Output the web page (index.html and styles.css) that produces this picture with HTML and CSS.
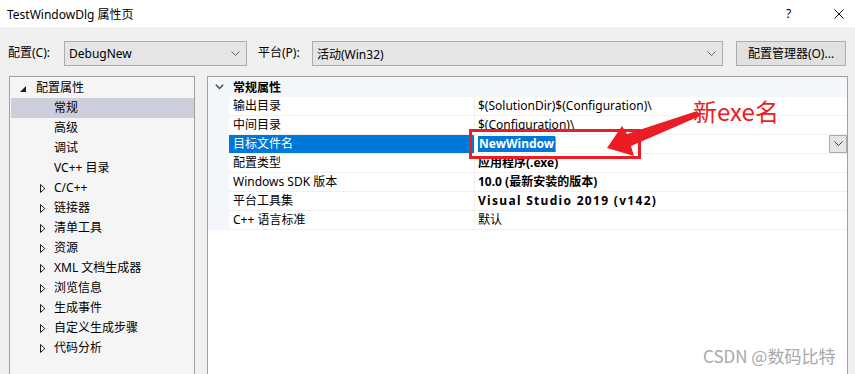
FILE: index.html
```html
<!DOCTYPE html>
<html lang="zh-CN">
<head>
<meta charset="utf-8">
<title>TestWindowDlg 属性页</title>
<link rel="stylesheet" href="styles.css">
</head>
<body>
<div class="window">
  <header class="titlebar">
    <span class="title">TestWindowDlg 属性页</span>
    <span class="help">?</span>
    <span class="close"><svg width="10" height="10" viewBox="0 0 10 10"><path d="M0.5 0.5 L9.5 9.5 M9.5 0.5 L0.5 9.5" stroke="#111" stroke-width="1"/></svg></span>
  </header>

  <div class="toolbar">
    <span class="label cfg-label">配置(C):</span>
    <div class="combo combo-cfg"><span>DebugNew</span><svg class="chev" width="9" height="6" viewBox="0 0 9 6"><path d="M0.5 0.5 L4.5 4.5 L8.5 0.5" fill="none" stroke="#606060" stroke-width="1"/></svg></div>
    <span class="label plat-label">平台(P):</span>
    <div class="combo combo-plat"><span>活动(Win32)</span><svg class="chev" width="9" height="6" viewBox="0 0 9 6"><path d="M0.5 0.5 L4.5 4.5 L8.5 0.5" fill="none" stroke="#606060" stroke-width="1"/></svg></div>
    <div class="btn">配置管理器(O)...</div>
  </div>

  <div class="main">
    <nav class="tree">
      <div class="node root"><svg class="exp" width="6" height="6" viewBox="0 0 6 6"><polygon points="6,0 6,6 0,6" fill="#1e1e1e"/></svg><span>配置属性</span></div>
      <div class="node leaf selected"><span>常规</span></div>
      <div class="node leaf"><span>高级</span></div>
      <div class="node leaf"><span>调试</span></div>
      <div class="node leaf"><span>VC++ 目录</span></div>
      <div class="node branch"><svg class="col" width="6" height="9" viewBox="0 0 6 9"><polygon points="0.5,0.5 4.8,4.5 0.5,8.5" fill="none" stroke="#1e1e1e" stroke-width="1"/></svg><span>C/C++</span></div>
      <div class="node branch"><svg class="col" width="6" height="9" viewBox="0 0 6 9"><polygon points="0.5,0.5 4.8,4.5 0.5,8.5" fill="none" stroke="#1e1e1e" stroke-width="1"/></svg><span>链接器</span></div>
      <div class="node branch"><svg class="col" width="6" height="9" viewBox="0 0 6 9"><polygon points="0.5,0.5 4.8,4.5 0.5,8.5" fill="none" stroke="#1e1e1e" stroke-width="1"/></svg><span>清单工具</span></div>
      <div class="node branch"><svg class="col" width="6" height="9" viewBox="0 0 6 9"><polygon points="0.5,0.5 4.8,4.5 0.5,8.5" fill="none" stroke="#1e1e1e" stroke-width="1"/></svg><span>资源</span></div>
      <div class="node branch"><svg class="col" width="6" height="9" viewBox="0 0 6 9"><polygon points="0.5,0.5 4.8,4.5 0.5,8.5" fill="none" stroke="#1e1e1e" stroke-width="1"/></svg><span>XML 文档生成器</span></div>
      <div class="node branch"><svg class="col" width="6" height="9" viewBox="0 0 6 9"><polygon points="0.5,0.5 4.8,4.5 0.5,8.5" fill="none" stroke="#1e1e1e" stroke-width="1"/></svg><span>浏览信息</span></div>
      <div class="node branch"><svg class="col" width="6" height="9" viewBox="0 0 6 9"><polygon points="0.5,0.5 4.8,4.5 0.5,8.5" fill="none" stroke="#1e1e1e" stroke-width="1"/></svg><span>生成事件</span></div>
      <div class="node branch"><svg class="col" width="6" height="9" viewBox="0 0 6 9"><polygon points="0.5,0.5 4.8,4.5 0.5,8.5" fill="none" stroke="#1e1e1e" stroke-width="1"/></svg><span>自定义生成步骤</span></div>
      <div class="node branch"><svg class="col" width="6" height="9" viewBox="0 0 6 9"><polygon points="0.5,0.5 4.8,4.5 0.5,8.5" fill="none" stroke="#1e1e1e" stroke-width="1"/></svg><span>代码分析</span></div>
    </nav>

    <section class="grid">
      <div class="cat">
        <span class="gut"><svg width="9" height="6" viewBox="0 0 9 6"><path d="M0.8 0.8 L4.5 4.5 L8.2 0.8" fill="none" stroke="#4a4a4a" stroke-width="1.5"/></svg></span>
        <span class="catname">常规属性</span>
      </div>
      <div class="row"><span class="gut"></span><span class="name">输出目录</span><span class="val">$(SolutionDir)$(Configuration)\</span></div>
      <div class="row"><span class="gut"></span><span class="name">中间目录</span><span class="val">$(Configuration)\</span></div>
      <div class="row active"><span class="gut"></span><span class="name">目标文件名</span><span class="val bold"><span class="sel-text">NewWindow</span><span class="caret"></span><span class="dd"><svg width="9" height="6" viewBox="0 0 9 6"><path d="M0.5 0.5 L4.5 4.5 L8.5 0.5" fill="none" stroke="#404040" stroke-width="1"/></svg></span></span></div>
      <div class="row"><span class="gut"></span><span class="name">配置类型</span><span class="val bold">应用程序(.exe)</span></div>
      <div class="row"><span class="gut"></span><span class="name">Windows SDK 版本</span><span class="val bold">10.0 (最新安装的版本)</span></div>
      <div class="row"><span class="gut"></span><span class="name">平台工具集</span><span class="val bold wide">Visual Studio 2019 (v142)</span></div>
      <div class="row"><span class="gut"></span><span class="name">C++ 语言标准</span><span class="val">默认</span></div>
    </section>
  </div>

  <div class="annot-box"></div>
  <svg class="annot-arrow" width="855" height="374" viewBox="0 0 855 374">
    <polygon points="607,148 622,126 627,134 697,111 700,116 631,146 634,156" fill="#ec1c24"/>
  </svg>
  <span class="annot-text">新exe名</span>
  <span class="watermark">CSDN @数码比特</span>
</div>
</body>
</html>
```

FILE: styles.css
```css
* { box-sizing: border-box; }
html, body { margin: 0; padding: 0; }
body {
  width: 855px;
  height: 374px;
  overflow: hidden;
  background: #f0f0f0;
  font-family: "Noto Sans", "Noto Sans CJK SC", sans-serif;
  font-size: 12px;
  color: #000;
}
.window {
  position: relative;
  width: 855px;
  height: 374px;
  display: flex;
  flex-direction: column;
  overflow: hidden;
}
.titlebar {
  height: 27px;
  background: #fff;
  display: flex;
  align-items: center;
  padding-left: 7px;
  flex: none;
}
.title { font-size: 12px; flex: 1; }
.help { width: 12px; margin-right: 36px; font-size: 12px; }
.close { width: 21px; display: flex; align-items: center; }

.toolbar {
  height: 49px;
  flex: none;
  display: flex;
  align-items: flex-start;
  padding: 14px 0 0 8px;
}
.label { height: 25px; line-height: 24px; }
.cfg-label { width: 56px; }
.plat-label { width: 54px; margin-left: 11px; }
.combo {
  height: 25px;
  background: #e5e5e5;
  border: 1px solid #acacac;
  display: flex;
  align-items: center;
  padding-left: 4px;
  padding-right: 6px;
}
.combo span { flex: 1; }
.combo-cfg { width: 183px; }
.combo-plat { width: 411px; }
.btn {
  margin-left: 13px;
  width: 110px;
  height: 25px;
  background: #e1e1e1;
  border: 1px solid #adadad;
  text-align: center;
  line-height: 23px;
}

.main {
  flex: 1;
  display: flex;
  gap: 12px;
  padding-left: 9px;
  min-height: 0;
}
.tree {
  width: 186px;
  height: 320px;
  background: #f5f5f5;
  border: 1px solid #a0a0a0;
  border-bottom: none;
  padding: 1px 0 0 1px;
}
.node {
  height: 20px;
  line-height: 20px;
  display: flex;
  align-items: center;
  white-space: nowrap;
}
.node.root { padding-left: 9px; }
.node.root .exp { margin-right: 10px; margin-top: 1px; }
.node.leaf { padding-left: 43px; }
.node.branch { padding-left: 29px; }
.node.branch .col { margin-right: 8px; }
.node.selected { background: #cccedb; width: 183px; }

.grid {
  width: 641px;
  height: 320px;
  background: #fff;
  border: 1px solid #a0a0a0;
  border-bottom: none;
}
.cat {
  height: 20px;
  background: #f3f6fb;
  display: flex;
  align-items: center;
}
.cat .gut { width: 21px; display: flex; justify-content: center; padding-left: 1px; }
.catname { font-weight: 700; padding-left: 4px; }
.row {
  height: 19px;
  display: flex;
}
.row .gut { width: 21px; background: #f3f6fb; flex: none; }
.row .name {
  width: 246px;
  flex: none;
  border-right: 1px solid #f0f0f0;
  border-bottom: 1px solid #f0f0f0;
  padding-left: 4px;
  line-height: 18px;
  white-space: nowrap;
}
.row .val {
  flex: 1;
  border-bottom: 1px solid #f0f0f0;
  padding-left: 3px;
  line-height: 18px;
  white-space: nowrap;
  display: flex;
  align-items: center;
}
.val.bold { font-weight: 700; }
.val.wide { letter-spacing: 1.3px; }
.row.active .name { background: #0078d7; color: #fff; }
.sel-text { background: #0078d7; color: #fff; line-height: 16px; padding: 0 1px; }
.caret { width: 1px; height: 15px; background: #f08a24; }
.dd {
  margin-left: auto;
  width: 18px;
  height: 18px;
  background: #e5e5e5;
  border: 1px solid #acacac;
  display: flex;
  align-items: center;
  justify-content: center;
}

.annot-box {
  position: absolute;
  left: 469px;
  top: 129px;
  width: 172px;
  height: 30px;
  border: 3px solid #ec1c24;
}
.annot-arrow { position: absolute; left: 0; top: 0; pointer-events: none; }
.annot-text {
  position: absolute;
  left: 693px;
  top: 96px;
  font-size: 24px;
  line-height: 30px;
  color: #ec1c24;
  font-family: "Noto Sans CJK SC", "Noto Sans", sans-serif;
}
.watermark {
  position: absolute;
  left: 703px;
  top: 344px;
  font-size: 17px;
  line-height: 24px;
  color: #a8a8a8;
  font-family: "Noto Sans CJK SC", sans-serif;
}
```
